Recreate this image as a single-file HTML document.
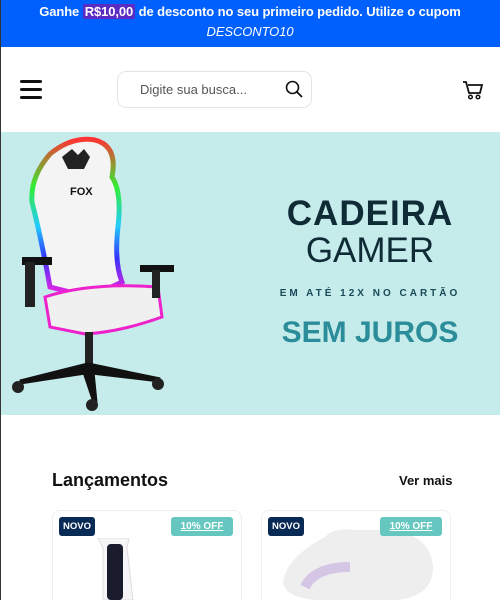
<!DOCTYPE html>
<html><head><meta charset="utf-8"><style>
*{margin:0;padding:0;box-sizing:border-box}
html,body{width:500px;height:600px;overflow:hidden}
body{background:#fff;font-family:"Liberation Sans",sans-serif;position:relative}
.lb{position:absolute;left:0;top:0;width:1px;height:600px;background:#333;z-index:5}
.top{position:absolute;left:0;top:0;width:500px;height:47px;background:#0060fe;color:#fff;text-align:center;font-size:13px;font-weight:bold;line-height:20px;padding-top:2px;letter-spacing:-0.1px}
.top .hl{background:#5b2bc4;padding:0 2px;border-radius:2px}
.top i{font-weight:normal;display:block}
.ham{position:absolute;left:20px;top:80px;width:22px}
.ham div{height:3px;background:#111;border-radius:2px;margin-bottom:5px}
.search{position:absolute;left:117px;top:71px;width:195px;height:37px;border:1px solid #e4e4e4;border-radius:9px;font-size:13px;color:#555;padding:10px 0 0 22px}
.banner{position:absolute;left:0;top:132px;width:500px;height:283px;background:#c6ebeb}
.t{position:absolute;color:#0f2c36;text-align:center}
.badge{position:absolute;background:#082a54;color:#fff;font-size:9.5px;font-weight:bold;padding:4px 4px;border-radius:3px}
.off{position:absolute;background:#66c6c0;color:#fff;font-size:10px;font-weight:bold;text-decoration:underline;padding:4px 7px;border-radius:3px;width:62px;text-align:center}
.card{position:absolute;top:510px;width:190px;height:110px;border:1px solid #eee;border-radius:8px}
</style></head><body>
<div class="lb"></div>
<div class="top">Ganhe <span class="hl">R$10,00</span> de desconto no seu primeiro pedido. Utilize o cupom<i>DESCONTO10</i></div>
<div class="ham"><div></div><div></div><div></div></div>
<div class="search">Digite sua busca...
<svg style="position:absolute;right:8px;top:8px" width="18" height="18" viewBox="0 0 18 18"><circle cx="7.5" cy="7.5" r="6" fill="none" stroke="#111" stroke-width="1.6"/><path d="M12 12l5 5" stroke="#111" stroke-width="1.8"/></svg></div>
<svg style="position:absolute;left:462px;top:79px" width="22" height="22" viewBox="0 0 22 22"><path d="M1 3h3l3 11h11l2-8H6" fill="none" stroke="#111" stroke-width="1.8"/><circle cx="8.5" cy="18" r="1.8" fill="none" stroke="#111" stroke-width="1.5"/><circle cx="16" cy="18" r="1.8" fill="none" stroke="#111" stroke-width="1.5"/></svg>
<div class="banner">
<svg style="position:absolute;left:0;top:0" width="200" height="283" viewBox="0 0 200 283">
<defs><linearGradient id="rgb" x1="0" y1="0" x2="0" y2="1"><stop offset="0" stop-color="#f33"/><stop offset=".3" stop-color="#3e3"/><stop offset=".55" stop-color="#2cf"/><stop offset=".75" stop-color="#33f"/><stop offset="1" stop-color="#f2d"/></linearGradient></defs>
<path d="M50 22 Q72 4 95 8 Q118 14 112 45 Q122 60 118 95 Q114 130 122 150 L90 165 L50 155 Q42 110 32 70 Q30 45 50 22Z" fill="#f4f4f4" stroke="url(#rgb)" stroke-width="5"/>
<path d="M45 165 Q90 150 158 155 L162 185 Q120 200 85 202 L50 195Z" fill="#f0f0f0" stroke="#e2c" stroke-width="3"/>
<text x="70" y="63" font-size="11" font-weight="bold" fill="#111">FOX</text>
<path d="M62 25 l10 -8 l6 6 l6 -6 l6 8 l-6 12 l-16 0z" fill="#222"/>
<rect x="22" y="125" width="30" height="8" fill="#111"/><rect x="25" y="130" width="10" height="45" fill="#222"/>
<rect x="140" y="133" width="34" height="7" fill="#111"/><rect x="152" y="138" width="8" height="28" fill="#222"/>
<rect x="85" y="200" width="8" height="35" fill="#222"/>
<path d="M20 250 L88 233 L160 248 L92 240 L95 270 L85 240Z" fill="#111" stroke="#111" stroke-width="5"/>
<circle cx="18" cy="255" r="6" fill="#222"/><circle cx="92" cy="273" r="6" fill="#222"/><circle cx="158" cy="252" r="6" fill="#222"/>
</svg>
<div class="t" style="left:270px;top:62px;width:200px;font-size:35px;font-weight:bold;letter-spacing:1px">CADEIRA</div>
<div class="t" style="left:270px;top:99px;width:200px;font-size:35px">GAMER</div>
<div class="t" style="left:268px;top:156px;width:204px;font-size:10px;font-weight:bold;letter-spacing:3px;color:#1a4a5a">EM ATÉ 12X NO CARTÃO</div>
<div class="t" style="left:270px;top:184px;width:200px;font-size:30px;font-weight:bold;color:#2a8d99">SEM JUROS</div>
</div>
<div style="position:absolute;left:52px;top:470px;font-size:18px;font-weight:bold;color:#111">Lançamentos</div>
<div style="position:absolute;left:399px;top:473px;font-size:13px;font-weight:bold;color:#111">Ver mais</div>
<div class="card" style="left:52px"></div>
<div class="card" style="left:261px"></div>
<svg style="position:absolute;left:95px;top:538px" width="40" height="62"><path d="M3 0 L8 10 L8 62 L38 62 L32 10 L34 0 Z" fill="#f6f6f8" stroke="#ddd"/><rect x="12" y="6" width="16" height="56" rx="4" fill="#1a1c2e"/></svg>
<svg style="position:absolute;left:275px;top:527px" width="165" height="73"><path d="M50 10 Q60 0 80 3 L110 3 Q155 5 158 40 Q158 70 120 73 L40 73 Q10 70 8 55 Q12 30 50 10Z" fill="#eee"/><path d="M30 60 Q40 40 75 40" stroke="#d6c6e6" stroke-width="10" fill="none"/></svg>
<div class="badge" style="left:59px;top:517px">NOVO</div>
<div class="off" style="left:171px;top:517px">10% OFF</div>
<div class="badge" style="left:268px;top:517px">NOVO</div>
<div class="off" style="left:380px;top:517px">10% OFF</div>
</body></html>
